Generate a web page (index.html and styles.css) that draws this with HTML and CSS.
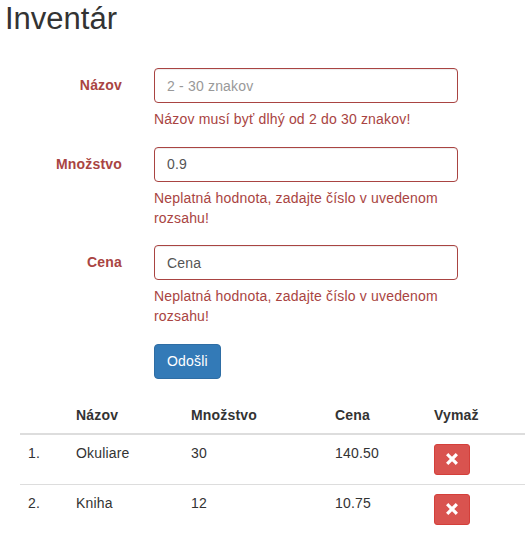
FILE: index.html
```html
<!DOCTYPE html>
<html lang="sk">
<head>
<meta charset="utf-8">
<title>Inventár</title>
<link rel="stylesheet" href="styles.css">
</head>
<body>
<div class="page">
  <h1 class="title">Inventár</h1>
  <form class="form">
    <label class="label" for="nazov">Názov</label>
    <div class="field">
      <input id="nazov" class="input" type="text" placeholder="2 - 30 znakov">
      <p class="help">Názov musí byť dlhý od 2 do 30 znakov!</p>
    </div>
    <label class="label" for="mnozstvo">Množstvo</label>
    <div class="field">
      <input id="mnozstvo" class="input" type="text" value="0.9">
      <p class="help">Neplatná hodnota, zadajte číslo v uvedenom rozsahu!</p>
    </div>
    <label class="label" for="cena">Cena</label>
    <div class="field">
      <input id="cena" class="input" type="text" value="Cena">
      <p class="help">Neplatná hodnota, zadajte číslo v uvedenom rozsahu!</p>
    </div>
    <div class="spacer"></div>
    <div class="field">
      <button type="button" class="btn-primary">Odošli</button>
    </div>
  </form>
  <table class="table">
    <colgroup>
      <col class="c1"><col class="c2"><col class="c3"><col class="c4"><col class="c5">
    </colgroup>
    <thead>
      <tr><th></th><th>Názov</th><th>Množstvo</th><th>Cena</th><th>Vymaž</th></tr>
    </thead>
    <tbody>
      <tr>
        <td>1.</td><td>Okuliare</td><td>30</td><td>140.50</td>
        <td><button type="button" class="btn-danger" aria-label="Vymaž"><svg class="x" viewBox="0 0 12 12" width="12" height="12"><path d="M2.3 2.3 L9.7 9.7 M9.7 2.3 L2.3 9.7" stroke="#fff" stroke-width="3.2" stroke-linecap="square"/></svg></button></td>
      </tr>
      <tr>
        <td>2.</td><td>Kniha</td><td>12</td><td>10.75</td>
        <td><button type="button" class="btn-danger" aria-label="Vymaž"><svg class="x" viewBox="0 0 12 12" width="12" height="12"><path d="M2.3 2.3 L9.7 9.7 M9.7 2.3 L2.3 9.7" stroke="#fff" stroke-width="3.2" stroke-linecap="square"/></svg></button></td>
      </tr>
    </tbody>
  </table>
</div>
</body>
</html>
```

FILE: styles.css
```css
* { box-sizing: border-box; }
html, body { margin: 0; padding: 0; background: #fff; }
body {
  font-family: "Liberation Sans", Arial, sans-serif;
  font-size: 14px;
  line-height: 20px;
  letter-spacing: 0.18px;
  color: #333;
}
.page { width: 531px; }
.title {
  margin: 1px 0 0 5px;
  font-size: 31px;
  font-weight: 500;
  line-height: 35px;
  letter-spacing: 0;
  color: #333;
}
.form {
  display: grid;
  grid-template-columns: 122px 304px;
  column-gap: 32px;
  row-gap: 18.5px;
  margin-top: 32px;
}
.label {
  text-align: right;
  font-weight: bold;
  color: #a94442;
  padding-top: 7px;
}
.field { display: flex; flex-direction: column; align-items: flex-start; }
.input {
  width: 304px;
  height: 35px;
  padding: 6px 12px;
  font-family: inherit;
  font-size: 14px;
  letter-spacing: 0.18px;
  color: #555;
  border: 1px solid #a94442;
  border-radius: 4px;
  box-shadow: inset 0 1px 1px rgba(0,0,0,.075);
  background: #fff;
  outline: none;
}
.input::placeholder { color: #999; }
.help {
  margin: 6px 0 -1px 0;
  color: #a94442;
  line-height: 20px;
}
.btn-primary {
  height: 35px;
  padding: 6px 12px;
  font-family: inherit;
  font-size: 14px;
  letter-spacing: 0.18px;
  color: #fff;
  background: #337ab7;
  border: 1px solid #2e6da4;
  border-radius: 4px;
}
.table {
  margin: 18px 0 0 20px;
  width: 505px;
  border-collapse: collapse;
  table-layout: fixed;
}
.c1 { width: 48px; }
.c2 { width: 115px; }
.c3 { width: 144px; }
.c4 { width: 99px; }
.c5 { width: 99px; }
.table th {
  text-align: left;
  font-weight: bold;
  padding: 8px;
  border-bottom: 2px solid #ddd;
  vertical-align: bottom;
}
.table td {
  padding: 8px 8px 9px;
  border-top: 1px solid #ddd;
  vertical-align: top;
}
.table tbody tr:first-child td { border-top: 0; }
.btn-danger {
  display: flex;
  align-items: center;
  justify-content: center;
  width: 36px;
  height: 31px;
  margin: 1px 0 0 0;
  padding: 0;
  background: #d9534f;
  border: 1px solid #d43f3a;
  border-radius: 3px;
}
.x { display: block; }
```
